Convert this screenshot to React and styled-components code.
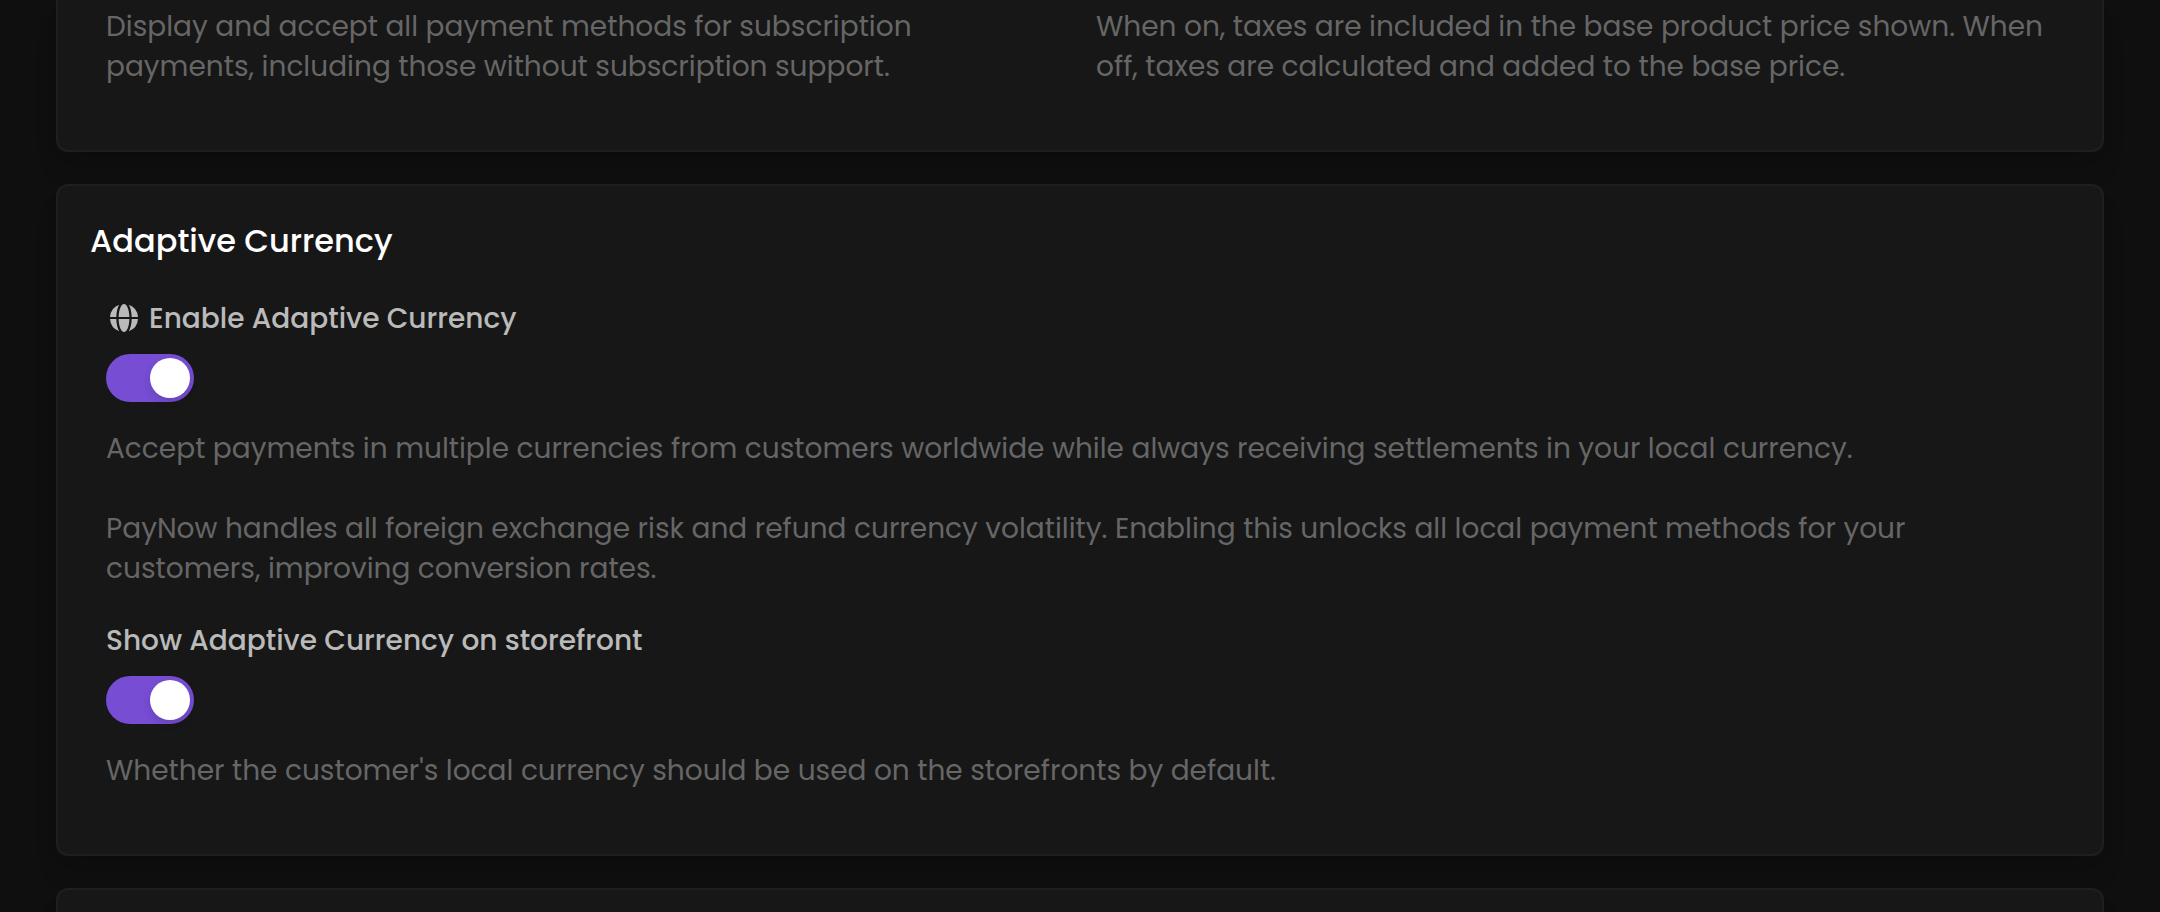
import React from "react";
import styled, { createGlobalStyle } from "styled-components";

const GlobalStyle = createGlobalStyle`
  *, *::before, *::after { box-sizing: border-box; }
  body {
    margin: 0;
    background: #0f0f0f;
    color: #ffffff;
    font-family: Poppins, Inter, "Liberation Sans", sans-serif;
    font-size: 28px;
    line-height: 40px;
  }
`;

const Page = styled.main`
  display: flex;
  flex-direction: column;
  gap: 32px;
  height: 100vh;
  overflow: hidden;
  padding: 0 56px;
`;

const Card = styled.section`
  flex: none;
  padding: ${({ $continued }) => ($continued ? "7px" : "33px")} 32px 63px;
  background: #171717;
  border: 2px solid #1f1f1f;
  border-top-width: ${({ $continued }) => ($continued ? "0" : "2px")};
  border-radius: ${({ $continued }) => ($continued ? "0 0 12px 12px" : "12px")};
  box-shadow:
    0 20px 30px -6px rgba(0, 0, 0, 0.1),
    0 8px 12px -4px rgba(0, 0, 0, 0.1);
`;

const CardTitle = styled.h2`
  margin: 0 0 36px;
  font-size: 32px;
  font-weight: 500;
  line-height: 44px;
`;

const Columns = styled.div`
  display: grid;
  grid-template-columns: 1fr 1fr;
`;

const Fields = styled.div`
  display: flex;
  flex-direction: column;
  gap: 32px;
`;

const Field = styled.div`
  padding: 0 16px;
`;

const FieldLabel = styled.label`
  display: flex;
  align-items: center;
  gap: 11px;
  color: #bababa;
  font-weight: 500;
`;

const IconBox = styled.span`
  display: flex;
  padding: 0 0 2px 4px;
`;

const Switch = styled.input`
  appearance: none;
  display: flex;
  align-items: center;
  width: 88px;
  height: 48px;
  margin: 15px 0 27px;
  padding: 4px;
  border-radius: 24px;
  background: #3a3a3a;
  cursor: pointer;

  &::before {
    content: "";
    width: 40px;
    height: 40px;
    border-radius: 50%;
    background: #ffffff;
    box-shadow: 0 4px 8px rgba(0, 0, 0, 0.12);
  }

  &:checked {
    justify-content: flex-end;
    background: #764dd3;
  }
`;

const Description = styled.p`
  margin: 0;
  color: #666666;

  & + & { margin-top: 40px; }
`;

function GlobeIcon() {
  return (
    <svg width="28" height="28" viewBox="0 0 28 28" fill="currentColor" aria-hidden="true">
      <path d="M14 0c-3 0-5.200 6-5.400 13h10.800C19.200 6 17 0 14 0Z" />
      <path d="M14 28c-3 0-5.200-6-5.400-13h10.800C19.200 22 17 28 14 28Z" />
      <path d="M9.200 .800A14 14 0 0 0 0 13h6.300C6.500 8 7.500 3.500 9.200 .800Z" />
      <path d="M18.800 .800A14 14 0 0 1 28 13h-6.300C21.500 8 20.500 3.500 18.800 .800Z" />
      <path d="M9.200 27.200A14 14 0 0 1 0 15h6.300C6.500 20 7.500 24.500 9.200 27.200Z" />
      <path d="M18.800 27.200A14 14 0 0 0 28 15h-6.300C21.500 20 20.500 24.500 18.800 27.200Z" />
    </svg>
  );
}

function ToggleField({ id, label, icon, children }) {
  return (
    <Field>
      <FieldLabel htmlFor={id}>
        {icon && <IconBox>{icon}</IconBox>}
        {label}
      </FieldLabel>
      <Switch id={id} type="checkbox" role="switch" defaultChecked />
      {children}
    </Field>
  );
}

export default function App() {
  return (
    <>
      <GlobalStyle />
      <Page>
        <Card $continued>
          <Columns>
            <Field>
              <Description>
                Display and accept all payment methods for subscription
                payments, including those without subscription support.
              </Description>
            </Field>
            <Field>
              <Description>
                When on, taxes are included in the base product price shown. When
                off, taxes are calculated and added to the base price.
              </Description>
            </Field>
          </Columns>
        </Card>

        <Card>
          <CardTitle>Adaptive Currency</CardTitle>
          <Fields>
            <ToggleField id="adaptive-currency" label="Enable Adaptive Currency" icon={<GlobeIcon />}>
              <Description>
                Accept payments in multiple currencies from customers worldwide
                while always receiving settlements in your local currency.
              </Description>
              <Description>
                PayNow handles all foreign exchange risk and refund currency
                volatility. Enabling this unlocks all local payment methods for your
                customers, improving conversion rates.
              </Description>
            </ToggleField>
            <ToggleField id="storefront-currency" label="Show Adaptive Currency on storefront">
              <Description>
                Whether the customer's local currency should be used on the
                storefronts by default.
              </Description>
            </ToggleField>
          </Fields>
        </Card>

        <Card />
      </Page>
    </>
  );
}
